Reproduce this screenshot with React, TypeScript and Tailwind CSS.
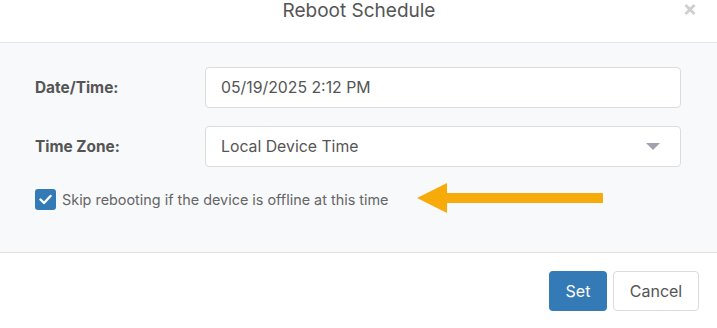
import React from "react"

export default function App() {
  return (
    <div className="relative w-[717px] h-[328px] bg-white overflow-hidden font-['Inter',sans-serif] text-[#555]">
      {/* Header */}
      <div className="relative h-[43px] border-b border-[#e3e5e8] flex justify-center">
        <h2 className="text-[19px] leading-[20px] pl-[1px] pt-[1px] text-[#555]">Reboot Schedule</h2>
        <svg className="absolute left-[684px] top-[4px]" width="12" height="11" viewBox="0 0 12 11">
          <path d="M1.5 1 L10.5 10 M10.5 1 L1.5 10" stroke="#cfcfcf" strokeWidth="2.8" />
        </svg>
      </div>

      {/* Body */}
      <div className="h-[210px] bg-[#f8f9fb] border-b border-[#e0e0e0] pl-[35px] pt-[24px]">
        <div className="flex items-center h-[41px]">
          <label className="w-[170px] text-[15.4px] font-bold text-[#555]">Date/Time:</label>
          <div className="w-[476px] h-[41px] bg-white border border-[#dcdcdc] rounded-[4px] flex items-center px-[15px] text-[15.8px] text-[#555]">
            05/19/2025 2:12 PM
          </div>
        </div>
        <div className="flex items-center h-[41px] mt-[18px]">
          <label className="w-[170px] text-[15.4px] font-bold text-[#555]">Time Zone:</label>
          <div className="w-[476px] h-[41px] bg-white border border-[#dcdcdc] rounded-[4px] flex items-center justify-between pl-[15px] pr-[20px] text-[15.8px] text-[#555]">
            <span>Local Device Time</span>
            <svg width="14" height="8" viewBox="0 0 14 8">
              <path d="M0 0 H14 L7 7 Z" fill="#a3a1b0" />
            </svg>
          </div>
        </div>
        <div className="flex items-center mt-[22px]">
          <span className="w-[21px] h-[21px] rounded-[3px] bg-[#337ab7] flex items-center justify-center">
            <svg width="13" height="11" viewBox="0 0 13 11">
              <path d="M1.5 5.5 L5 9 L11.5 2" fill="none" stroke="white" strokeWidth="2.4" strokeLinecap="round" strokeLinejoin="round" />
            </svg>
          </span>
          <span className="ml-[6px] text-[14.4px] text-[#666]">Skip rebooting if the device is offline at this time</span>
        </div>
      </div>

      {/* Annotation arrow */}
      <svg className="absolute left-[417px] top-[183px]" width="187" height="31" viewBox="0 0 187 31">
        <path d="M0 15 L30 0 V10 H186 V20 H30 V30 Z" fill="#f7ab0a" />
      </svg>

      {/* Footer */}
      <div className="flex justify-end gap-[6px] pr-[18px] pt-[18px]">
        <button className="w-[58px] h-[40px] rounded-[4px] bg-[#337ab7] text-white text-[16px]">Set</button>
        <button className="w-[86px] h-[40px] rounded-[4px] bg-white border border-[#dcdcdc] text-[#555] text-[16px]">Cancel</button>
      </div>
    </div>
  )
}
